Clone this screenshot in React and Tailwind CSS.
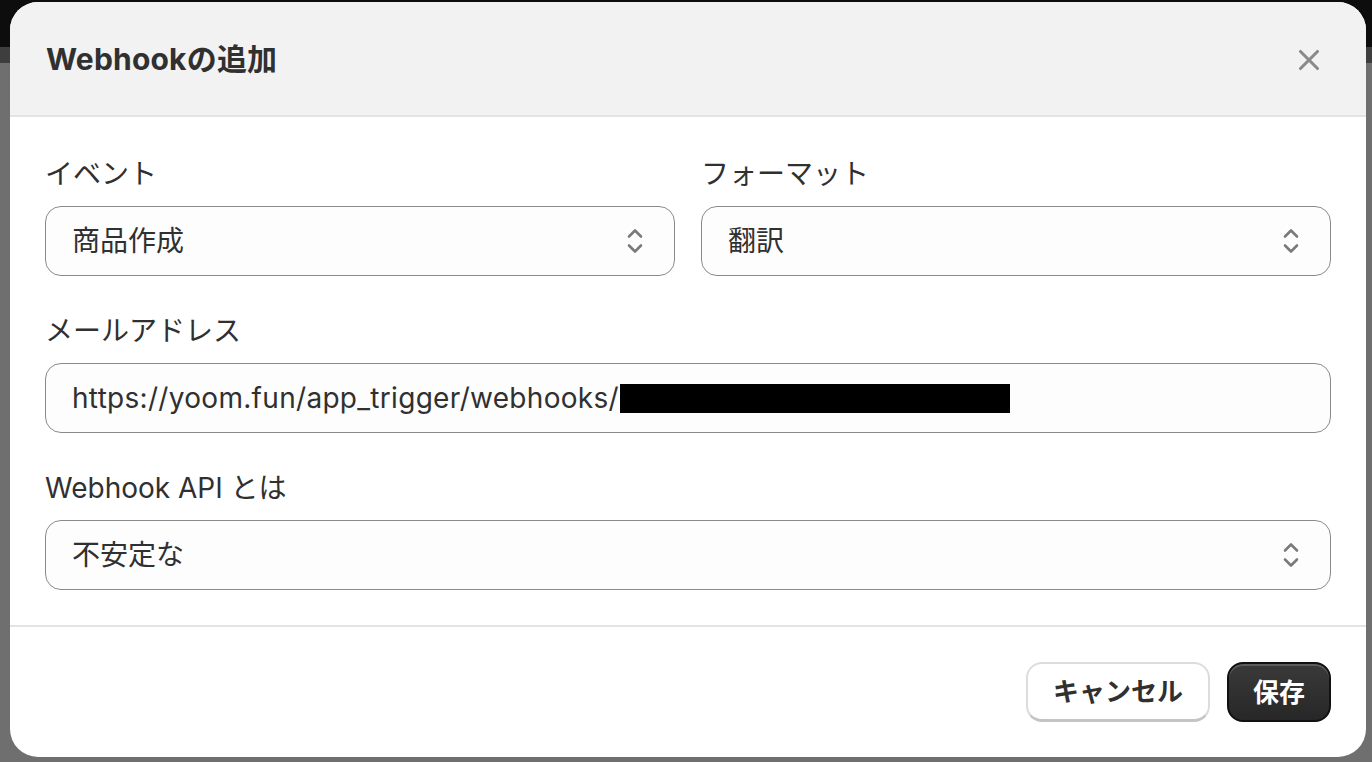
import { X } from 'lucide-react';

const jp = { fontFamily: 'Inter, "Noto Sans CJK JP", "Noto Sans", sans-serif' };

function SelectChevron() {
  return (
    <svg width="18" height="30" viewBox="0 0 18 30" fill="none" className="shrink-0">
      <path d="M3 10.5 L9 4.5 L15 10.5" stroke="#7a7a7a" strokeWidth="2.6" strokeLinecap="round" strokeLinejoin="round" />
      <path d="M3 19.5 L9 25.5 L15 19.5" stroke="#7a7a7a" strokeWidth="2.6" strokeLinecap="round" strokeLinejoin="round" />
    </svg>
  );
}

function Field({ label, children }) {
  return (
    <div className="flex flex-col">
      <label className="text-[28px] leading-[40px] text-[#303030] mb-[12px]">{label}</label>
      {children}
    </div>
  );
}

function SelectBox({ value }) {
  return (
    <div className="h-[70px] rounded-[16px] border border-[#8a8a8a] bg-[#fdfdfd] flex items-center justify-between pl-[26px] pr-[30px]">
      <span className="text-[28px] text-[#303030]">{value}</span>
      <SelectChevron />
    </div>
  );
}

export default function App() {
  return (
    <div className="relative w-[1372px] h-[762px] overflow-hidden bg-[#6f6f6f]" style={jp}>
      {/* page behind the modal */}
      <div className="h-[47px] bg-[#0d0d0d]" />
      <div className="h-[16px] bg-[#3e3e3e]" />

      {/* modal */}
      <div className="absolute left-[10px] top-[2px] w-[1356px] h-[755px] rounded-[28px] bg-white overflow-hidden flex flex-col">
        <div className="h-[115px] bg-[#f2f2f2] border-b-2 border-[#e3e3e3] flex items-center justify-between pl-[36px] pr-[40px] pt-[2px]">
          <h2 className="text-[30px] font-bold text-[#303030] tracking-[0.2px]">Webhookの追加</h2>
          <X size={34} strokeWidth={2.2} color="#8a8a8a" />
        </div>

        <div className="px-[35px] pt-[37px] pb-[35px] flex flex-col gap-[35px] border-b-2 border-[#e3e3e3]">
          <div className="grid grid-cols-2 gap-[26px]">
            <Field label="イベント">
              <SelectBox value="商品作成" />
            </Field>
            <Field label="フォーマット">
              <SelectBox value="翻訳" />
            </Field>
          </div>

          <Field label="メールアドレス">
            <div className="h-[70px] rounded-[16px] border border-[#8a8a8a] bg-[#fdfdfd] flex items-center pl-[26px]">
              <span className="text-[28px] text-[#303030] tracking-[0.3px]">https://yoom.fun/app_trigger/webhooks/</span>
              <span className="ml-[1px] w-[390px] h-[29px] bg-black" />
            </div>
          </Field>

          <Field label="Webhook API とは">
            <SelectBox value="不安定な" />
          </Field>
        </div>

        <div className="flex-1 flex items-center justify-end gap-[17px] px-[35px]">
          <button className="h-[60px] w-[184px] rounded-[16px] bg-white border-2 border-[#dcdcdc] border-b-[3px] border-b-[#c4c4c4] text-[26px] font-bold text-[#303030]">
            キャンセル
          </button>
          <button className="h-[60px] w-[104px] rounded-[16px] bg-gradient-to-b from-[#3a3a3a] to-[#272727] border-2 border-[#111] shadow-[inset_0_2px_0_rgba(255,255,255,0.18)] text-[26px] font-bold text-white">
            保存
          </button>
        </div>
      </div>
    </div>
  );
}
